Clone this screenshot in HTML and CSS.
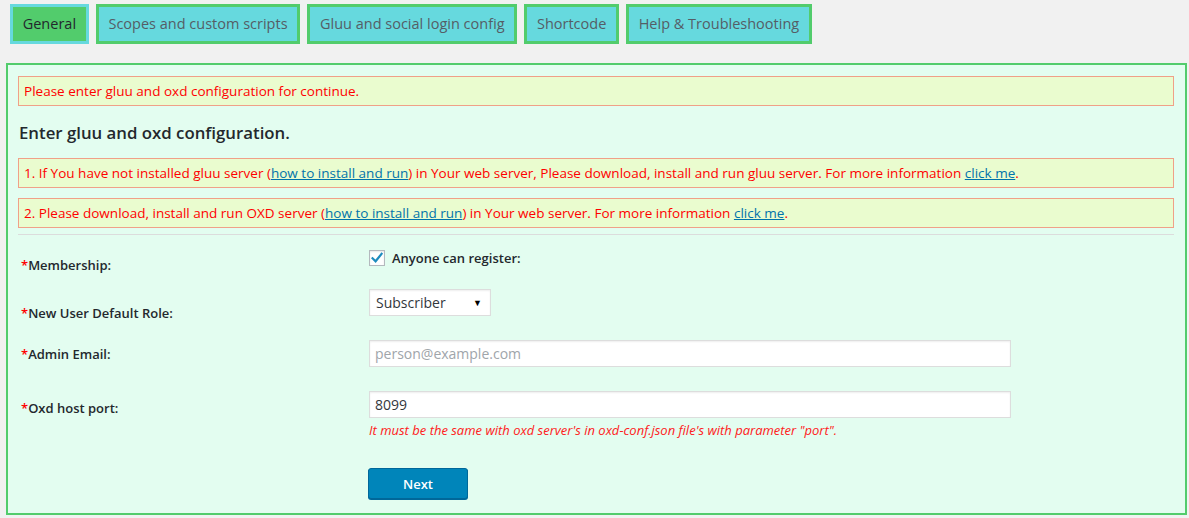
FILE: index.html
```html
<!DOCTYPE html>
<html>
<head>
<meta charset="utf-8">
<link rel="stylesheet" href="styles.css">
</head>
<body>
<nav class="tabs">
  <a class="tab tab-active">General</a>
  <a class="tab">Scopes and custom scripts</a>
  <a class="tab">Gluu and social login config</a>
  <a class="tab">Shortcode</a>
  <a class="tab">Help &amp; Troubleshooting</a>
</nav>
<div class="panel">
  <div class="notice">Please enter gluu and oxd configuration for continue.</div>
  <h3 class="title">Enter gluu and oxd configuration.</h3>
  <div class="notice notice-step">1. If You have not installed gluu server (<a class="link">how to install and run</a>) in Your web server, Please download, install and run gluu server. For more information <a class="link">click me</a>.</div>
  <div class="notice notice-step">2. Please download, install and run OXD server (<a class="link">how to install and run</a>) in Your web server. For more information <a class="link">click me</a>.</div>
  <hr class="sep">
  <div class="form">
    <div class="row row-1">
      <div class="label"><span class="req">*</span>Membership:</div>
      <div class="field">
        <label class="check"><span class="box"><svg width="12" height="12" viewBox="0 0 12 12"><path d="M1.5 6.2 L4.6 9.3 L10.6 1.8" fill="none" stroke="#1e8cbe" stroke-width="2.2" stroke-linecap="square"/></svg></span>Anyone can register:</label>
      </div>
    </div>
    <div class="row row-2">
      <div class="label"><span class="req">*</span>New User Default Role:</div>
      <div class="field">
        <div class="select"><span>Subscriber</span><span class="arrow">▼</span></div>
      </div>
    </div>
    <div class="row row-3">
      <div class="label"><span class="req">*</span>Admin Email:</div>
      <div class="field">
        <div class="input placeholder">person@example.com</div>
      </div>
    </div>
    <div class="row row-4">
      <div class="label"><span class="req">*</span>Oxd host port:</div>
      <div class="field">
        <div class="input">8099</div>
        <p class="hint">It must be the same with oxd server's in oxd-conf.json file's with parameter "port".</p>
      </div>
    </div>
    <div class="row row-5">
      <div class="label"></div>
      <div class="field"><button class="btn">Next</button></div>
    </div>
  </div>
</div>
</body>
</html>
```
FILE: styles.css
```css
html, body {
  margin: 0;
  padding: 0;
  background: #f1f1f1;
  font-family: "Open Sans", "Liberation Sans", sans-serif;
  font-size: 13px;
  color: #444;
}
.tabs {
  display: flex;
  gap: 7px;
  padding: 4px 0 0 10px;
  height: 40px;
}
.tab {
  box-sizing: border-box;
  height: 40px;
  border: 3px solid #52cc6c;
  background: #66d9de;
  color: #555d66;
  font-size: 14.5px;
  line-height: 34px;
  padding: 0 9.7px;
}
.tab-active {
  border-color: #66d9de;
  background: #52cc6c;
  color: #23282d;
}
.panel {
  margin: 19px 2px 0 6px;
  border: 2px solid #52cc6c;
  background: #e3fdf0;
  padding: 11px 11px 0 10px;
  height: 437px;
}
.notice {
  box-sizing: border-box;
  height: 30px;
  border: 1px solid #f0a088;
  background: #eafccf;
  color: #ff0000;
  font-size: 13.52px;
  line-height: 28px;
  padding: 0 5px;
}
.notice-step {
  margin-top: 10px;
}
.title {
  margin: 0;
  height: 52px;
  line-height: 53px;
  font-size: 16.8px;
  font-weight: 600;
  color: #23282d;
  padding-left: 1px;
}
.title + .notice-step { margin-top: 0; }
.link {
  color: #0073aa;
  text-decoration: underline;
}
.sep {
  margin: 6px 0 0;
  border: 0;
  border-top: 1px solid #dcdcdc;
  height: 0;
}
.form { padding-left: 3px; }
.row {
  display: flex;
  align-items: flex-start;
}
.label {
  width: 348px;
  flex: none;
  font-weight: 600;
  color: #23282d;
  line-height: 17px;
}
.req { color: #ff0000; }
.field { flex: 1; }
.row-1 { height: 47px; }
.row-1 .label { padding-top: 22px; }
.row-1 .field { padding-top: 15px; }
.row-2 { height: 50px; }
.row-2 .label { padding-top: 23px; }
.row-2 .field { padding-top: 7px; }
.row-3 { height: 51px; }
.row-3 .label { padding-top: 14px; }
.row-3 .field { padding-top: 8px; }
.row-4 { height: 85px; }
.row-4 .label { padding-top: 17px; }
.row-4 .field { padding-top: 8px; }
.row-5 .field { padding-top: 0; margin-left: -1px; }
.check {
  display: flex;
  align-items: center;
  gap: 7px;
  font-weight: 600;
  color: #23282d;
  line-height: 16px;
}
.box {
  box-sizing: border-box;
  width: 16px;
  height: 16px;
  border: 1px solid #b4b9be;
  background: #fff;
  box-shadow: inset 0 1px 2px rgba(0,0,0,.1);
  display: flex;
  align-items: center;
  justify-content: center;
}
.select {
  box-sizing: border-box;
  width: 122px;
  height: 27px;
  border: 1px solid #ddd;
  background: #fff;
  color: #32373c;
  font-size: 14px;
  display: flex;
  align-items: center;
  justify-content: space-between;
  padding: 0 8px 0 6px;
  box-shadow: inset 0 1px 2px rgba(0,0,0,.07);
}
.arrow { font-size: 9px; color: #000; }
.input {
  box-sizing: border-box;
  width: 642px;
  height: 27px;
  border: 1px solid #ddd;
  background: #fff;
  box-shadow: inset 0 1px 2px rgba(0,0,0,.07);
  color: #32373c;
  font-size: 14px;
  line-height: 25px;
  padding: 0 5px;
}
.placeholder { color: #a0a5aa; }
.hint {
  margin: 4px 0 0;
  font-style: italic;
  color: #ff2020;
  font-size: 13px;
  line-height: 17px;
}
.btn {
  box-sizing: border-box;
  width: 100px;
  height: 31px;
  background: #0085ba;
  border: 1px solid #006799;
  border-radius: 3px;
  color: #fff;
  font-family: "Open Sans", "Liberation Sans", sans-serif;
  font-weight: 600;
  font-size: 13px;
  box-shadow: 0 1px 0 #006799;
}
```
